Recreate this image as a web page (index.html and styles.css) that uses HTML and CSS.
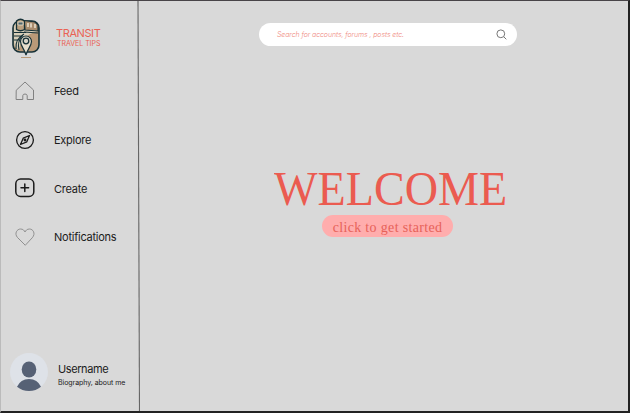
FILE: index.html
```html
<!DOCTYPE html>
<html lang="en">
<head>
<meta charset="utf-8">
<title>Transit Travel Tips</title>
<link rel="stylesheet" href="styles.css">
</head>
<body>
<div class="app">
  <aside class="sidebar">
    <div class="brand">
      <svg class="logo" viewBox="0 0 30 42">
        <rect x="2" y="3" width="26" height="31" rx="7" fill="#b99a78" stroke="#173238" stroke-width="1.6"/>
        <path d="M3 9Q4 4 9 4H21Q27 5 27 13L19 16Q10 20 8 32Q3 30 3 24Z" fill="#d8cfb9"/>
        <path d="M13 2.500L24 4L27 7V13L14 12Z" fill="#a88c6d" stroke="#173238" stroke-width="1.1"/>
        <path d="M17 5V9M20 5.300V9.500M24 6V10" stroke="#e4dac6" stroke-width="1.7"/>
        <path d="M5.500 3Q9.500 -.5 13.500 3V11.500Q9.500 14 5.500 11.500Z" fill="#baa07f" stroke="#173238" stroke-width="1.3"/>
        <path d="M7 4H12V7H7Z" fill="#51666b" stroke="#e7dfcd" stroke-width=".8"/>
        <path d="M3 14.500H15M3 18H12M3 22H9M13 14L27 15M13 16Q4 21 5 31M11 18Q6 24 8 32" fill="none" stroke="#173238" stroke-width="1.1"/>
        <path d="M15 37C13.500 31 9.500 28 9.500 23.500A5.500 5.500 0 0 1 20.500 23.500C20.500 28 16.500 31 15 37Z" fill="#e7dfcd" stroke="#173238" stroke-width="1.2"/>
        <circle cx="15" cy="23" r="2.800" fill="#d9d5c8" stroke="#173238" stroke-width="1.300"/>
        <path d="M10 39.500H20" stroke="#b99a78" stroke-width="1"/>
      </svg>
      <div class="brand-text">
        <div class="brand-name">TRANSIT</div>
        <div class="brand-sub">TRAVEL TIPS</div>
      </div>
    </div>
    <nav class="nav">
      <a class="item"><svg class="icon home" viewBox="0 0 20 20"><path d="M1.500 9L10 1L18.500 9V18.500H12.200V14.700Q12 13 10 13Q8 13 7.800 14.700V18.500H1.500Z"/></svg><span>Feed</span></a>
      <a class="item"><svg class="icon" viewBox="0 0 20 20"><circle cx="10" cy="10" r="8.400"/><path d="M14.500 5.500L11.800 11.800L5.500 14.500L8.200 8.200Z"/><circle cx="10" cy="10" r=".8"/></svg><span>Explore</span></a>
      <a class="item"><svg class="icon create" viewBox="0 0 20 20"><rect x=".8" y="0" width="18" height="17.500" rx="4.800"/><path d="M9.800 5V12.500M6 8.750H13.600"/></svg><span>Create</span></a>
      <a class="item"><svg class="icon heart" viewBox="0 0 20 20"><path d="M10 18L2.500 10.500C-1 6.500 2 2 5.500 2C8 2 9.300 3.500 10 5C10.700 3.500 12 2 14.500 2C18 2 21 6.500 17.500 10.500Z"/></svg><span>Notifications</span></a>
    </nav>
    <div class="profile">
      <svg class="avatar" viewBox="0 0 38 38"><circle cx="19" cy="19" r="19" fill="#dee2e8"/><ellipse cx="19" cy="16.500" rx="7.300" ry="8" fill="#566175"/><path d="M7 33.800Q10.500 26 19 26Q27.500 26 31 33.800Q26 38 19 38Q12 38 7 33.800Z" fill="#566175"/></svg>
      <div class="who">
        <div class="username">Username</div>
        <div class="bio">Biography, about me</div>
      </div>
    </div>
  </aside>
  <svg class="divider" viewBox="0 0 4 410" preserveAspectRatio="none"><path d="M2 0L3.500 410" stroke="#666" stroke-width="1.100"/></svg>
  <main class="main">
    <div class="search">
      <span>Search for accounts, forums , posts etc.</span>
      <svg class="glass" viewBox="0 0 11 11"><circle cx="4.800" cy="4.800" r="3.900"/><path d="M7.700 7.700L10.300 10.300"/></svg>
    </div>
    <h1 class="welcome"><span>WELCOME</span></h1>
    <div class="start"><span>click to get started</span></div>
  </main>
</div>
</body>
</html>
```
FILE: styles.css
```css
* { box-sizing: border-box; }
body { margin: 0; font-family: Inter, "Liberation Sans", sans-serif; color: #1b1b1b; }
.app {
  display: flex;
  width: 630px;
  height: 413px;
  background: #d9d9d9;
  border: solid #222;
  border-width: 1px 2px 2px 1px;
  border-top-color: #484448;
  border-left-color: #bbb;
}
.sidebar { width: 135px; display: flex; flex-direction: column; flex: none; }
.divider { width: 4px; height: 410px; flex: none; }
.brand { display: flex; height: 66px; padding: 17px 0 0 10px; }
.logo { width: 30px; height: 42px; flex: none; }
.brand-text { padding: 9px 0 0 15px; color: #ea6254; white-space: nowrap; }
.brand-name { font-size: 11px; line-height: 13px; letter-spacing: -.4px; }
.brand-sub { font-size: 7px; line-height: 8px; letter-spacing: -.03px; padding-left: 1px; }
.nav { display: flex; flex-direction: column; }
.item { height: 48.7px; display: flex; align-items: center; font-size: 11px; letter-spacing: -.25px; gap: 19px; padding-left: 13px; white-space: nowrap; }
.icon { width: 20px; height: 20px; flex: none; overflow: visible; margin-left: 1px; fill: none; stroke: #1b1b1b; stroke-width: 1.3; stroke-linejoin: round; stroke-linecap: round; }
.home { stroke: #777; stroke-width: .9; }
.heart { stroke: #888; stroke-width: .9; }
.create { stroke-width: 1.5; }
.profile { display: flex; margin-top: auto; padding: 0 0 20px 9px; }
.avatar { width: 38px; height: 38px; flex: none; }
.who { padding: 9px 0 0 10px; white-space: nowrap; }
.username { font-size: 11px; line-height: 14px; letter-spacing: -.4px; }
.bio { font-size: 7px; line-height: 13px; letter-spacing: -.05px; }
.main { flex: 1; padding: 22px 0 0 119px; }
.search { width: 258px; height: 23px; border-radius: 12px; background: #fff; display: flex; align-items: center; justify-content: space-between; padding: 0 10px 0 18px; font-size: 7px; letter-spacing: -.08px; font-style: italic; font-weight: 300; color: #ef8a81; white-space: nowrap; }
.glass { width: 11px; height: 11px; fill: none; stroke: #777; stroke-width: 1; }
.welcome { margin: 114px 0 0 15px; height: 55px; width: 234px; font: 400 49.5px/58px "Liberation Serif", serif; color: #eb5b50; }
.welcome span { display: inline-block; transform: scaleX(.932); transform-origin: left; }
.start { width: 131px; height: 22px; margin-left: 63px; border-radius: 11px; background: #ffadad; color: #e76259; font: 14px/25px "Liberation Serif", serif; letter-spacing: .33px; text-align: center; white-space: nowrap; }
```
